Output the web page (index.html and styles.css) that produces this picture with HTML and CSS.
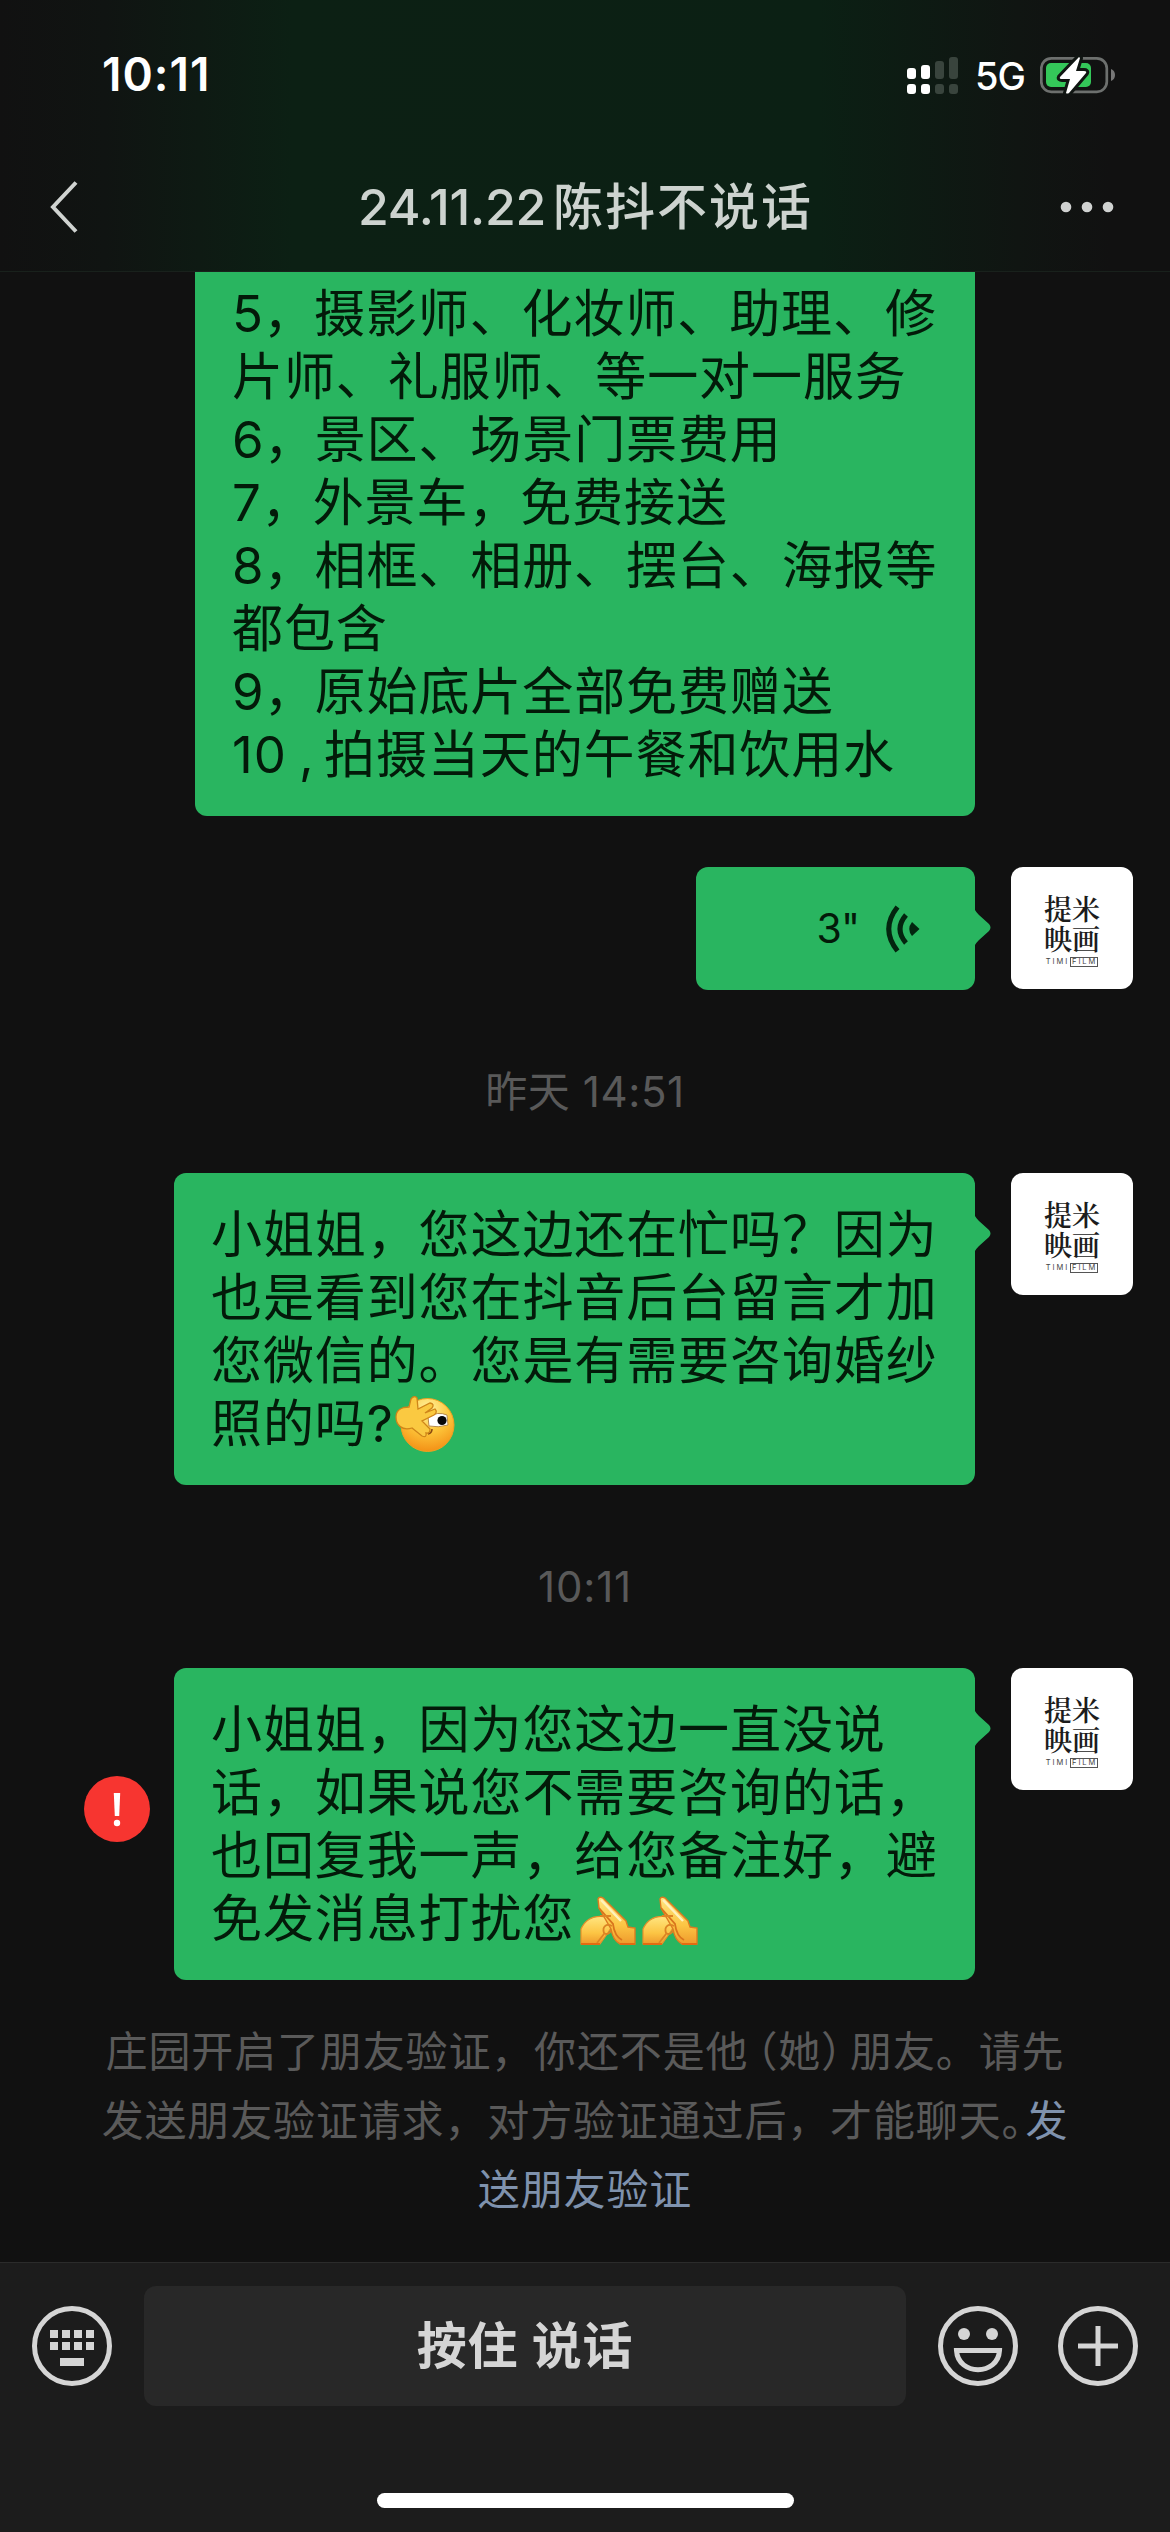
FILE: index.html
```html
<!DOCTYPE html>
<html lang="zh-CN">
<head>
<meta charset="utf-8">
<title>24.11.22陈抖不说话</title>
<link rel="stylesheet" href="styles.css">
</head>
<body>
<svg width="0" height="0" class="defs">
  <defs>
    <radialGradient id="face" cx=".5" cy=".2" r=".85">
      <stop offset="0" stop-color="#fff3a0"/><stop offset=".5" stop-color="#fdc63a"/><stop offset="1" stop-color="#f28a12"/>
    </radialGradient>
    <linearGradient id="skin" x1="0" y1="0" x2="0" y2="1">
      <stop offset="0" stop-color="#ffe680"/><stop offset=".6" stop-color="#fcc544"/><stop offset="1" stop-color="#ee9a2c"/>
    </linearGradient>
    <symbol id="salute" viewBox="0 0 56 50">
      <path d="M1 33C6 22 16 19 27 21L33 29L25 41L20 48H1Z" fill="url(#skin)" stroke="#e8912b" stroke-width="1.2"/>
      <path d="M18 3C19 0 23 1 25 4L46 25L48 31L55 32V48H40C34 45 32 39 31 33L19 12Z" fill="url(#skin)" stroke="#dd7c20" stroke-width="1.4"/>
      <path d="M21 4L41 25" stroke="#fff2bd" stroke-width="2.4" fill="none"/>
      <path d="M19 12L33 28C34 36 36 41 42 44" stroke="#d9741c" stroke-width="1.8" fill="none"/>
      <path d="M20 20L31 20M32 30C26 27 22 31 24 37C27 39 30 38 31 34M24 38L17 47" stroke="#dc8424" stroke-width="1.8" fill="none"/>
      <path d="M1 48H20M40 48H55" stroke="#e36b12" stroke-width="2"/>
    </symbol>
  </defs>
</svg>

<header class="header">
  <div class="status">
    <span class="clock">10:11</span>
    <div class="status-right">
      <svg class="signal" width="51" height="37" viewBox="0 0 51 37">
        <g fill="#fff"><rect y="11" width="9" height="11" rx="3"/><rect x="14" y="8" width="9" height="14" rx="3"/><rect y="27" width="9" height="10" rx="3"/><rect x="14" y="27" width="9" height="10" rx="3"/></g>
        <g fill="#39443d"><rect x="28" y="4" width="9" height="18" rx="3"/><rect x="42" width="9" height="22" rx="3"/><rect x="28" y="27" width="9" height="10" rx="3"/><rect x="42" y="27" width="9" height="10" rx="3"/></g>
      </svg>
      <span class="network">5G</span>
      <svg class="battery" width="76" height="40" viewBox="0 0 76 40">
        <rect x="1.3" y="3.3" width="65.5" height="33.5" rx="10" fill="none" stroke="#6d706e" stroke-width="2.7"/>
        <rect x="6" y="8" width="45" height="24" rx="5" fill="#34c759"/>
        <path d="M71 14Q75 15.500 75 20T71 26Z" fill="#777"/>
        <path d="M39 2L20 22Q19 24 22 24H30L26 38Q27 39 29 38L46 18Q47 16 44 16H36L40 3Z" fill="#fff" stroke="#101512" stroke-width="6" stroke-linejoin="round" paint-order="stroke"/>
      </svg>
    </div>
  </div>
  <div class="navbar">
    <svg class="back" width="30" height="54" viewBox="0 0 30 54"><path d="M27 2.500L4 27L27 51.500" fill="none" stroke="#d0d3d1" stroke-width="4"/></svg>
    <h1 class="title">24.11.22<span>陈抖不说话</span></h1>
    <svg class="more" width="54" height="12" viewBox="0 0 54 12" fill="#d0d2d1"><circle cx="6" cy="6" r="5.300"/><circle cx="27" cy="6" r="5.300"/><circle cx="48" cy="6" r="5.300"/></svg>
  </div>
</header>

<main class="chat">
  <div class="row row-first">
    <div class="bubble bubble-cut"><span class="num">5，</span>摄影师、化妆师、助理、修<br>片师、礼服师、等一对一服务<br><span class="num">6，</span>景区、场景门票费用<br><span class="seven">7，</span>外景车，免费接送<br><span class="num">8，</span>相框、相册、摆台、海报等<br>都包含<br><span class="num">9，</span>原始底片全部免费赠送<br>10<span class="comma"> , </span>拍摄当天的午餐和饮用水</div>
  </div>

  <div class="row row-voice">
    <div class="bubble voice tail">
      <span>3"</span>
      <svg width="34" height="48" viewBox="0 0 34 48" fill="none" stroke="#03250f" stroke-width="5"><path d="M11.500 2Q-6 24 11.500 46"/><path d="M20 10Q8 24 20 38"/><path d="M26 17L33.500 24L26 31Q20.500 24 26 17Z" fill="#03250f" stroke="none"/></svg>
    </div>
    <div class="avatar"><b>提米<br>映画</b><small>TIMI<i>FILM</i></small></div>
  </div>

  <time class="stamp stamp-one">昨天 14:51</time>

  <div class="row">
    <div class="bubble wide tail">小姐姐，您这边还在忙吗？因为<br>也是看到您在抖音后台留言才加<br>您微信的。您是有需要咨询婚纱<br>照的吗?<svg class="emoji-face" width="62" height="60" viewBox="0 0 62 60">
      <circle cx="33.500" cy="30" r="26.500" fill="url(#face)" stroke="#f0a020" stroke-width="1"/>
      <path d="M34 22Q44 16 53 20L54 30Q44 33 35 31Z" fill="#fff" stroke="#b98b4a" stroke-width="1"/>
      <circle cx="48" cy="25.500" r="4.600" fill="#080808"/>
      <path d="M34 39Q38 38 38 34" stroke="#8a4a10" stroke-width="1.600" fill="none"/>
      <path d="M2 22C2 15 8 12 15 12L17 4Q20 0 23 3L24 14L36 8Q41 9 38 13L31 18L41 14Q44 17 40 20L28 26L36 34Q36 39 32 38Q33 43 28 41L18 33C8 36 2 30 2 22Z" fill="#fac941" stroke="#cf8519" stroke-width="1.300"/>
    </svg></div>
    <div class="avatar"><b>提米<br>映画</b><small>TIMI<i>FILM</i></small></div>
  </div>

  <time class="stamp stamp-two">10:11</time>

  <div class="row">
    <div class="failed"><svg width="66" height="66" viewBox="0 0 66 66"><circle cx="33" cy="33" r="33" fill="#f73530"/><path d="M29.800 17H36.200L35.200 40H30.800Z" fill="#fff"/><circle cx="33" cy="47" r="3.200" fill="#fff"/></svg></div>
    <div class="bubble wide tail">小姐姐，因为您这边一直没说<br>话，如果说您不需要咨询的话，<br>也回复我一声，给您备注好，避<br>免发消息打扰您<svg class="emoji-hand" width="56" height="50"><use href="#salute"/></svg><svg class="emoji-hand" width="56" height="50"><use href="#salute"/></svg></div>
    <div class="avatar"><b>提米<br>映画</b><small>TIMI<i>FILM</i></small></div>
  </div>

  <p class="notice">庄园开启了朋友验证，你还不是他<span class="open">（</span>她<span class="close">）</span>朋友。请先<br>发送朋友验证请求，对方验证通过后，才能聊天<span class="stop">。</span><a>发<br>送朋友验证</a></p>
</main>

<footer class="composer">
  <div class="bar">
    <svg width="80" height="80" viewBox="0 0 80 80" fill="#d5d5d5"><circle cx="40" cy="40" r="37.500" fill="none" stroke="#d5d5d5" stroke-width="5"/><path d="M18 24h8v8h-8zM30 24h8v8h-8zM42 24h8v8h-8zM54 24h8v8h-8zM18 36h8v8h-8zM30 36h8v8h-8zM42 36h8v8h-8zM54 36h8v8h-8zM28 52h24v8H28z"/></svg>
    <button class="talk">按住 说话</button>
    <svg width="80" height="80" viewBox="0 0 80 80" fill="none" stroke="#d5d5d5" stroke-width="5"><circle cx="40" cy="40" r="37.500"/><circle cx="26" cy="28" r="6" fill="#d5d5d5" stroke="none"/><circle cx="54" cy="28" r="6" fill="#d5d5d5" stroke="none"/><path d="M18.500 44.500H61.500C60 70 20 70 18.500 44.500Z"/></svg>
    <svg width="80" height="80" viewBox="0 0 80 80" fill="none" stroke="#d5d5d5" stroke-width="5"><circle cx="40" cy="40" r="37.500"/><path d="M40 20V60M20 40H60"/></svg>
  </div>
  <div class="home"></div>
</footer>
</body>
</html>
```
FILE: styles.css
```css
* { box-sizing: border-box; }
body {
  margin: 0;
  width: 1170px;
  height: 2532px;
  display: flex;
  flex-direction: column;
  overflow: hidden;
  background: #111;
  font-family: Inter, "Noto Sans CJK SC", sans-serif;
  font-synthesis: none;
}
svg { display: block; flex: none; }
.defs { position: absolute; }

.header {
  flex: none;
  height: 272px;
  background: linear-gradient(90deg, #111 0, #101412 9%, #0c2014 25%, #0b2014 70%, #101512 87%, #111 95%);
  border-bottom: 1px solid #19211c;
}
.status {
  height: 150px;
  display: flex;
  justify-content: space-between;
  align-items: center;
  padding: 0 54px 0 102px;
  color: #fff;
}
.clock { font-size: 46px; font-weight: 600; letter-spacing: 1px; margin-bottom: 3px; }
.status-right { display: flex; align-items: center; }
.network { font-size: 38px; font-weight: 500; margin: 2px 15px 0 17px; letter-spacing: -1px; }
.navbar {
  height: 114px;
  display: flex;
  align-items: center;
  justify-content: space-between;
  padding: 0 56px 0 49px;
}
.title {
  margin: 0 0 0 32px;
  font-size: 50px;
  line-height: 60px;
  font-weight: 500;
  color: #cdd3cf;
  white-space: nowrap;
  letter-spacing: -.3px;
}
.title span { letter-spacing: 2px; margin-left: 7px; }

.chat { flex: 1; }
.row {
  display: flex;
  justify-content: flex-end;
  align-items: flex-start;
  gap: 36px;
  padding-right: 37px;
}
.row-first { padding-right: 195px; }
.row-voice { margin-top: 51px; }
.bubble {
  position: relative;
  padding: 30px 37px;
  border-radius: 12px;
  background: #29b560;
  color: #031a09;
  font-size: 51px;
  line-height: 63px;
  letter-spacing: .9px;
  white-space: nowrap;
}
.bubble-cut { width: 780px; padding-top: 10px; border-radius: 0 0 12px 12px; }
.num { letter-spacing: 0; }
.seven { letter-spacing: .4px; }
.comma { letter-spacing: -2px; }
.wide { width: 801px; height: 312px; }
.tail::after {
  content: "";
  position: absolute;
  left: 100%;
  top: 43px;
  width: 16px;
  height: 35px;
  background: inherit;
  clip-path: path("M0 0Q1 2 4 5L14 14Q17 17.500 14 21L4 30Q1 33 0 35Z");
}
.voice {
  width: 279px;
  height: 123px;
  padding: 0 55px 0 0;
  display: flex;
  justify-content: flex-end;
  align-items: center;
  gap: 27px;
  font-size: 41px;
  letter-spacing: -1px;
}
.avatar {
  width: 122px;
  height: 122px;
  border-radius: 12px;
  background: #fff;
  color: #1c1c1c;
  display: flex;
  flex-direction: column;
  align-items: center;
  padding-top: 26px;
}
.avatar b {
  font: 600 28px/30px "Noto Serif CJK SC", "Noto Sans CJK SC", serif;
}
.avatar small {
  display: flex;
  align-items: center;
  gap: 1px;
  margin-top: 4px;
  font-size: 7.5px;
  line-height: 8px;
  letter-spacing: 1.9px;
  color: #444;
}
.avatar i { font-style: normal; border: 1px solid #555; padding-left: 1px; }
.stamp {
  display: block;
  text-align: center;
  color: #595959;
  font-size: 42px;
  line-height: 60px;
}
.stamp-one { margin: 72px 0 51px; letter-spacing: .6px; }
.stamp-two { margin: 72px 0 51px; letter-spacing: .8px; }
.failed { align-self: center; margin: -30px -12px 0 0; }
.emoji-face { display: inline-block; vertical-align: -3px; margin: -10px 0; }
.emoji-hand { display: inline-block; vertical-align: -4px; margin: -5px 0 -5px 6px; }
.notice {
  margin: 37px 0 0;
  text-align: center;
  font-size: 42px;
  line-height: 69px;
  letter-spacing: .85px;
  color: #5a5a5a;
  white-space: nowrap;
}
.notice a { color: #7f92ad; }
.open { margin-left: -13px; }
.close { letter-spacing: -13px; }
.stop { letter-spacing: -18px; }

.composer {
  flex: none;
  height: 270px;
  background: #1c1c1c;
  border-top: 1px solid #2b2b2b;
  padding: 23px 32px 24px;
  display: flex;
  flex-direction: column;
  justify-content: space-between;
  align-items: center;
}
.bar { width: 100%; display: flex; align-items: center; gap: 40px; }
.talk {
  flex: 1;
  height: 120px;
  margin: 0 -8px;
  border: 0;
  border-radius: 12px;
  background: #282828;
  color: #d5d5d5;
  font: 600 50px/60px Inter, "Noto Sans CJK SC", sans-serif;
  letter-spacing: .8px;
}
.home { width: 417px; height: 15px; border-radius: 8px; background: #fff; }
```
